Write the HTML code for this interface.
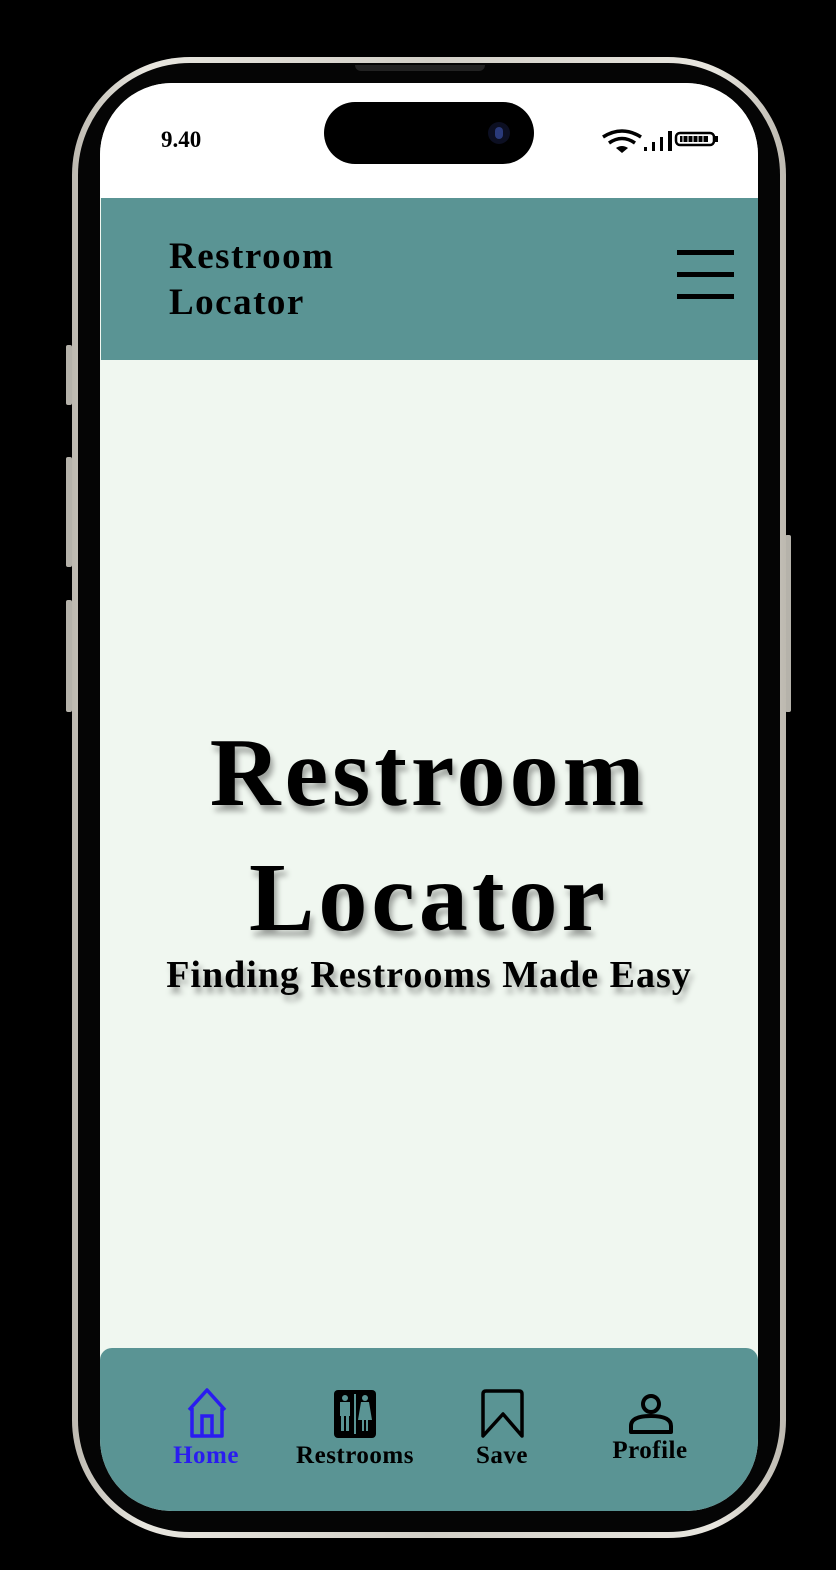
<!DOCTYPE html>
<html><head><style>
*{margin:0;padding:0;box-sizing:border-box}
body{width:836px;height:1570px;background:#000;position:relative;overflow:hidden;font-family:"Liberation Serif",serif}
.frame{position:absolute;left:72px;top:57px;width:714px;height:1481px;border-radius:118px;background:linear-gradient(90deg,#bdb9b0,#e8e6df 10%,#d2cfc7 50%,#e8e6df 90%,#bdb9b0)}
.bez{position:absolute;left:78px;top:63px;width:702px;height:1469px;border-radius:112px;background:#050505}
.btn{position:absolute;background:#b5b2aa;border-radius:2px}
.screen{position:absolute;left:100px;top:83px;width:658px;height:1428px;border-radius:72px;overflow:hidden;background:#f0f7f0}
.status{position:absolute;left:0;top:0;width:658px;height:115px;background:#fff}
.island{position:absolute;left:224px;top:19px;width:210px;height:62px;border-radius:31px;background:#000}
.cam{position:absolute;left:164px;top:20px;width:22px;height:22px;border-radius:50%;background:#0c0f22}
.cam:after{content:"";position:absolute;left:7px;top:5px;width:8px;height:12px;border-radius:4px;background:#2a3a7a}
.time{position:absolute;left:61px;top:44px;font-size:23px;font-weight:bold}
.header{position:absolute;left:1px;top:115px;width:657px;height:162px;background:#5a9494}
.htitle{position:absolute;left:68px;top:36px;font-size:37px;font-weight:bold;letter-spacing:1.5px;line-height:46px}
.bar{position:absolute;left:576px;width:57px;height:5px;background:#000}
.big{position:absolute;left:0;width:658px;text-align:center;font-weight:bold;text-shadow:3px 6px 6px rgba(0,0,0,.35)}
.nav{position:absolute;left:0;top:1265px;width:658px;height:163px;background:#5a9494;border-radius:12px 12px 0 0}
.lbl{position:absolute;font-weight:bold;font-size:25px;letter-spacing:0.5px;text-align:center;width:160px}
</style></head><body>
<div class="btn" style="left:66px;top:345px;width:6px;height:60px"></div>
<div class="btn" style="left:66px;top:457px;width:6px;height:110px"></div>
<div class="btn" style="left:66px;top:600px;width:6px;height:112px"></div>
<div class="btn" style="left:785px;top:535px;width:6px;height:177px"></div>
<div class="frame"></div>
<div class="bez"></div>
<div style="position:absolute;left:355px;top:65px;width:130px;height:6px;background:#222;border-radius:0 0 6px 6px"></div>
<div class="screen">
 <div class="status">
  <div class="time">9.40</div>
  <div class="island"><div class="cam"></div></div>
  <svg style="position:absolute;left:500px;top:44px" width="120" height="28" viewBox="0 0 120 28">
   <path d="M3 10 Q22 -2 41 10" stroke="#000" stroke-width="3.5" fill="none"/>
   <path d="M9 16 Q22 7 35 16" stroke="#000" stroke-width="3.5" fill="none"/>
   <path d="M16 21 L22 26 L28 21 Q22 17 16 21Z" fill="#000"/>
   <rect x="44" y="20" width="3" height="4" fill="#000"/>
   <rect x="52" y="15" width="3" height="9" fill="#000"/>
   <rect x="60" y="10" width="3" height="14" fill="#000"/>
   <rect x="68" y="4" width="4" height="20" fill="#000"/>
   <rect x="76" y="6" width="38" height="12" rx="4" fill="none" stroke="#000" stroke-width="2.5"/>
   <rect x="80" y="9" width="28" height="6" fill="#000"/>
   <path d="M83 9v6M88 9v6M93 9v6M98 9v6M103 9v6" stroke="#fff" stroke-width="1"/>
   <rect x="115" y="9" width="3" height="6" fill="#000"/>
  </svg>
 </div>
 <div class="header">
  <div class="htitle">Restroom<br>Locator</div>
  <div class="bar" style="top:52px"></div>
  <div class="bar" style="top:74px"></div>
  <div class="bar" style="top:96px"></div>
 </div>
 <div class="big" style="top:630px;font-size:98px;letter-spacing:4px;line-height:120px">Restroom</div>
 <div class="big" style="top:755px;font-size:98px;letter-spacing:4px;line-height:120px">Locator</div>
 <div class="big" style="top:868px;font-size:38px;letter-spacing:1px;line-height:48px">Finding Restrooms Made Easy</div>
 <div class="nav">
  <svg style="position:absolute;left:86px;top:40px" width="42" height="50" viewBox="0 0 42 50">
   <path d="M3 22 L21 2 L39 22 M6 20 V48 H36 V20" stroke="#2a1cf0" stroke-width="3.5" fill="none" stroke-linejoin="round"/>
   <path d="M16 48 V28 H26 V48" stroke="#2a1cf0" stroke-width="3.5" fill="none"/>
  </svg>
  <div class="lbl" style="left:26px;top:94px;color:#2a1cf0">Home</div>
  <svg style="position:absolute;left:234px;top:42px" width="42" height="48" viewBox="0 0 42 48">
   <rect x="0" y="0" width="42" height="48" rx="4" fill="#000"/>
   <rect x="20" y="4" width="2" height="40" fill="#5a9494"/>
   <circle cx="11" cy="8" r="3" fill="#5a9494"/><rect x="6" y="12" width="10" height="14" fill="#5a9494"/><rect x="7" y="24" width="3" height="17" fill="#5a9494"/><rect x="12" y="24" width="3" height="17" fill="#5a9494"/>
   <circle cx="31" cy="8" r="3" fill="#5a9494"/><path d="M27 12 H35 L38 30 H24Z" fill="#5a9494"/><rect x="28" y="28" width="2" height="13" fill="#5a9494"/><rect x="32" y="28" width="2" height="13" fill="#5a9494"/>
  </svg>
  <div class="lbl" style="left:175px;top:94px">Restrooms</div>
  <svg style="position:absolute;left:380px;top:40px" width="46" height="52" viewBox="0 0 46 52">
   <path d="M3 48 V6 Q3 3 6 3 H39 Q42 3 42 6 V48 L23 26 Z" stroke="#000" stroke-width="3.5" fill="none" stroke-linejoin="round"/>
  </svg>
  <div class="lbl" style="left:322px;top:94px">Save</div>
  <svg style="position:absolute;left:528px;top:44px" width="46" height="44" viewBox="0 0 46 44">
   <circle cx="23" cy="12" r="8" stroke="#000" stroke-width="4" fill="none"/>
   <path d="M3 40 V34 Q3 24 23 24 Q43 24 43 34 V40 Z" stroke="#000" stroke-width="4" fill="none" stroke-linejoin="round"/>
  </svg>
  <div class="lbl" style="left:470px;top:89px">Profile</div>
 </div>
</div>
</body></html>
